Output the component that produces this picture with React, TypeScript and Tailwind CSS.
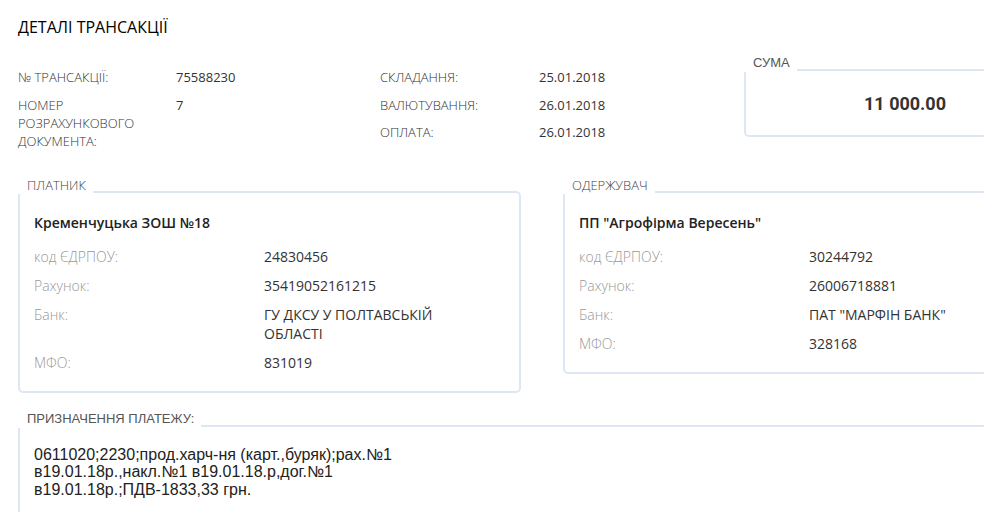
import React from "react";

type Row = { label: string; value: string };

const sans = "font-['Open_Sans',sans-serif]";
const arial = "font-['Liberation_Sans',Arial,sans-serif]";

const Legend: React.FC<{ title: string; arialFont?: boolean }> = ({ title, arialFont }) => (
  <span
    className={`absolute -top-[17px] -left-[2px] bg-white pl-[9px] pr-[7px] text-[13px] leading-[18px] ${
      arialFont ? `${arial} text-[#555]` : `${sans} font-light text-[#444]`
    }`}
  >
    {title}
  </span>
);

const TopInfo: React.FC<{ rows: Row[]; labelWidth: string; blockWidth: string }> = ({
  rows,
  labelWidth,
  blockWidth,
}) => (
  <div className={`flex flex-col gap-[9.5px] ${blockWidth}`}>
    {rows.map((r) => (
      <div key={r.label} className="flex text-[13px] leading-[18px]">
        <div className={`${labelWidth} pr-4 font-light text-[#333]`}>{r.label}</div>
        <div className="text-[#333]">{r.value}</div>
      </div>
    ))}
  </div>
);

const PartyCard: React.FC<{ title: string; name: string; rows: Row[] }> = ({ title, name, rows }) => (
  <div className="relative w-[503px] rounded-[5px] border-2 border-[#dfe6f3] px-[14px] pt-[20px] pb-[19px]">
    <Legend title={title} />
    <div className="text-[14px] font-semibold leading-[20px] text-[#222]">{name}</div>
    <div className="mt-[14px] flex flex-col gap-[10px]">
      {rows.map((r) => (
        <div key={r.label} className="flex text-[14px] leading-[19px]">
          <div className="w-[230px] shrink-0 font-light text-[#999]">{r.label}</div>
          <div className="w-[200px] text-[#333]">{r.value}</div>
        </div>
      ))}
    </div>
  </div>
);

export default function App() {
  const left: Row[] = [
    { label: "№ ТРАНСАКЦІЇ:", value: "75588230" },
    { label: "НОМЕР РОЗРАХУНКОВОГО ДОКУМЕНТА:", value: "7" },
  ];
  const dates: Row[] = [
    { label: "СКЛАДАННЯ:", value: "25.01.2018" },
    { label: "ВАЛЮТУВАННЯ:", value: "26.01.2018" },
    { label: "ОПЛАТА:", value: "26.01.2018" },
  ];
  const payer: Row[] = [
    { label: "код ЄДРПОУ:", value: "24830456" },
    { label: "Рахунок:", value: "35419052161215" },
    { label: "Банк:", value: "ГУ ДКСУ У ПОЛТАВСЬКІЙ ОБЛАСТІ" },
    { label: "МФО:", value: "831019" },
  ];
  const receiver: Row[] = [
    { label: "код ЄДРПОУ:", value: "30244792" },
    { label: "Рахунок:", value: "26006718881" },
    { label: "Банк:", value: 'ПАТ "МАРФІН БАНК"' },
    { label: "МФО:", value: "328168" },
  ];

  return (
    <div className={`h-[512px] w-[984px] overflow-hidden bg-white ${sans}`}>
      <div className="w-[1084px] pl-[18px] pt-[17px]">
        <h1 className="text-[16px] font-medium leading-[20px] text-black">ДЕТАЛІ ТРАНСАКЦІЇ</h1>

        <div className="mt-[31px] flex items-start">
          <TopInfo rows={left} labelWidth="w-[158px]" blockWidth="w-[362px]" />
          <TopInfo rows={dates} labelWidth="w-[159px]" blockWidth="w-[364px]" />
          <div className="relative mt-px flex h-[68px] w-[322px] items-center justify-center rounded-[5px] border-2 border-[#dfe6f3]">
            <Legend title="СУМА" arialFont />
            <span className="font-['Roboto',sans-serif] text-[18px] font-bold text-[#333]">11 000.00</span>
          </div>
        </div>

        <div className="mt-[41px] flex items-start gap-[42px]">
          <PartyCard title="ПЛАТНИК" name="Кременчуцька ЗОШ №18" rows={payer} />
          <PartyCard title="ОДЕРЖУВАЧ" name={'ПП "Агрофірма Вересень"'} rows={receiver} />
        </div>

        <div className="relative mt-[32px] h-[120px] w-[1048px] rounded-[5px] border-2 border-[#dfe6f3] px-[14px] pt-[19px]">
          <Legend title="ПРИЗНАЧЕННЯ ПЛАТЕЖУ:" arialFont />
          <p className={`${arial} w-[400px] text-[16px] leading-[17.5px] text-[#222]`}>
            0611020;2230;прод.харч-ня (карт.,буряк);рах.№1 в19.01.18р.,накл.№1 в19.01.18.р,дог.№1
            в19.01.18р.;ПДВ-1833,33 грн.
          </p>
        </div>
      </div>
    </div>
  );
}
